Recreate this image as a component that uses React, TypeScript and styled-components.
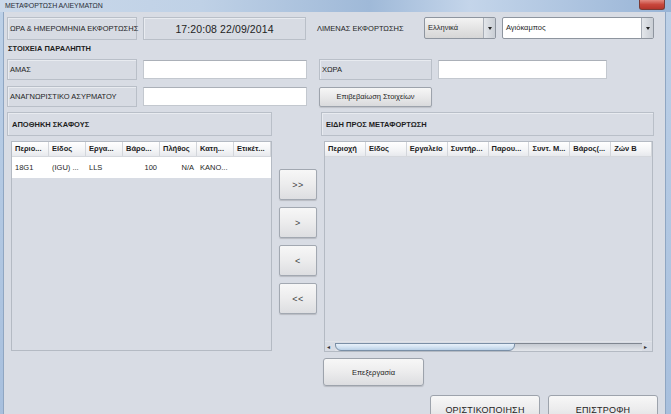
import styled, { createGlobalStyle } from "styled-components";

const GlobalStyle = createGlobalStyle`
  html, body {
    margin: 0;
    padding: 0;
    background: #d8dce4;
  }
  * {
    box-sizing: border-box;
  }
`;

const leftColumns = ["Περιο...", "Είδος", "Εργα...", "Βάρο...", "Πλήθος", "Κατη...", "Ετικέτ..."];
const rightColumns = ["Περιοχή", "Είδος", "Εργαλείο", "Συντήρ...", "Παρου...", "Συντ. Μ...", "Βάρος(...", "Ζών Β"];

const leftRows = [
  [
    { text: "18G1" },
    { text: "(IGU) ..." },
    { text: "LLS" },
    { text: "100", right: true },
    { text: "N/A", right: true },
    { text: "ΚΑΝΟ..." },
    { text: "" },
  ],
];

const App = () => {
  return (
    <Window>
      <GlobalStyle />
      <TitleBar>
        <TitleText>ΜΕΤΑΦΟΡΤΩΣΗ ΑΛΙΕΥΜΑΤΩΝ</TitleText>
        <CloseButton />
      </TitleBar>

      <Frame>
        <Edge $w={4} />
        <Content>
          <Row $h={23} $mt={5}>
            <LabelBox $w={130}>ΩΡΑ &amp; ΗΜΕΡΟΜΗΝΙΑ ΕΚΦΟΡΤΩΣΗΣ</LabelBox>
            <ValueBox $w={163} $ml={6}>17:20:08 22/09/2014</ValueBox>
            <PlainLabel $w={107} $ml={11}>ΛΙΜΕΝΑΣ ΕΚΦΟΡΤΩΣΗΣ</PlainLabel>
            <Select $w={72} $grey>
              <span>Ελληνικά</span>
              <SelectArrow />
            </Select>
            <Select $w={152} $ml={6}>
              <span>Αγιόκαμπος</span>
              <SelectArrow />
            </Select>
          </Row>

          <SectionTitle>ΣΤΟΙΧΕΙΑ ΠΑΡΑΛΗΠΤΗ</SectionTitle>

          <Row $h={21} $mt={0}>
            <LabelBox $w={130}>ΑΜΑΣ</LabelBox>
            <Input $w={164} $ml={6} />
            <LabelBox $w={113} $ml={12}>ΧΩΡΑ</LabelBox>
            <Input $w={169} $ml={6} />
          </Row>

          <Row $h={21} $mt={6}>
            <LabelBox $w={130}>ΑΝΑΓΝΩΡΙΣΤΙΚΟ ΑΣΥΡΜΑΤΟΥ</LabelBox>
            <Input $w={164} $ml={6} />
            <SmallButton $w={113} $ml={12}>Επιβεβαίωση Στοιχείων</SmallButton>
          </Row>

          <Main>
            <Column>
              <PanelHeader>ΑΠΟΘΗΚΗ ΣΚΑΦΟΥΣ</PanelHeader>
              <Table $ml={4} $h={210}>
                <HeaderRow $cols={7}>
                  {leftColumns.map((c) => (
                    <HeaderCell key={c}>{c}</HeaderCell>
                  ))}
                </HeaderRow>
                {leftRows.map((row, i) => (
                  <DataRow key={i} $cols={7}>
                    {row.map((cell, j) => (
                      <DataCell key={j} $right={cell.right}>
                        {cell.text}
                      </DataCell>
                    ))}
                  </DataRow>
                ))}
              </Table>
            </Column>

            <Arrows>
              <ArrowButton>&gt;&gt;</ArrowButton>
              <ArrowButton>&gt;</ArrowButton>
              <ArrowButton>&lt;</ArrowButton>
              <ArrowButton>&lt;&lt;</ArrowButton>
            </Arrows>

            <Column>
              <PanelHeader>ΕΙΔΗ ΠΡΟΣ ΜΕΤΑΦΟΡΤΩΣΗ</PanelHeader>
              <Table $ml={3} $mr={1} $h={211}>
                <HeaderRow $cols={8}>
                  {rightColumns.map((c) => (
                    <HeaderCell key={c}>{c}</HeaderCell>
                  ))}
                </HeaderRow>
                <TableFill />
                <ScrollBar>
                  <ScrollArrow>◂</ScrollArrow>
                  <Track>
                    <Thumb />
                  </Track>
                  <ScrollArrow>▸</ScrollArrow>
                </ScrollBar>
              </Table>
              <EditButton>Επεξεργασία</EditButton>
            </Column>
          </Main>

          <Footer>
            <BigButton>ΟΡΙΣΤΙΚΟΠΟΙΗΣΗ</BigButton>
            <BigButton>ΕΠΙΣΤΡΟΦΗ</BigButton>
          </Footer>
        </Content>
        <Edge $w={6} />
      </Frame>
    </Window>
  );
};

export default App;

const Window = styled.div`
  width: 671px;
  height: 414px;
  overflow: hidden;
  display: flex;
  flex-direction: column;
  background: #d8dce4;
  font-family: "Liberation Sans", Arial, sans-serif;
  color: #1e1e1e;
`;

const TitleBar = styled.div`
  height: 12px;
  flex: none;
  display: flex;
  justify-content: space-between;
  align-items: flex-start;
  padding-left: 5px;
  padding-right: 6px;
  background: linear-gradient(
    90deg,
    #cbd9ea 0%,
    #bfd1e6 30%,
    #9fb9d8 55%,
    #c4d5ea 70%,
    #98b4d6 100%
  );
`;

const TitleText = styled.span`
  font-size: 7px;
  line-height: 11px;
  color: #2a2f38;
  letter-spacing: -0.1px;
`;

const CloseButton = styled.div`
  width: 26px;
  height: 10px;
  border-radius: 0 0 3px 3px;
  background: linear-gradient(180deg, #e28a80 0%, #c8473c 50%, #b4352c 100%);
  border: 1px solid #7a3b36;
  border-top: none;
`;

const Frame = styled.div`
  flex: 1;
  display: flex;
`;

const Edge = styled.div<{ $w: number }>`
  width: ${(p) => p.$w}px;
  flex: none;
  background: linear-gradient(180deg, #bcd0e7, #a7bfdd);
  border-right: ${(p) => (p.$w === 4 ? "1px solid #8fa6c2" : "none")};
  border-left: ${(p) => (p.$w === 6 ? "1px solid #8fa6c2" : "none")};
`;

const Content = styled.div`
  flex: 1;
  display: flex;
  flex-direction: column;
  padding-left: 3px;
  min-width: 0;
`;

const Row = styled.div<{ $h: number; $mt: number }>`
  display: flex;
  align-items: center;
  height: ${(p) => p.$h}px;
  margin-top: ${(p) => p.$mt}px;
`;

const LabelBox = styled.div<{ $w: number; $ml?: number }>`
  width: ${(p) => p.$w}px;
  margin-left: ${(p) => p.$ml ?? 0}px;
  height: 100%;
  flex: none;
  display: flex;
  align-items: center;
  padding-left: 2px;
  font-size: 7.5px;
  white-space: nowrap;
  border: 1px solid #b9bfc8;
  box-shadow: inset 1px 1px 0 #e8ebf0;
  background: #d7dbe3;
`;

const ValueBox = styled(LabelBox)`
  justify-content: center;
  font-size: 10.5px;
  padding-left: 0;
  letter-spacing: 0.1px;
`;

const PlainLabel = styled.div<{ $w: number; $ml?: number }>`
  width: ${(p) => p.$w}px;
  margin-left: ${(p) => p.$ml ?? 0}px;
  flex: none;
  font-size: 7.5px;
  white-space: nowrap;
`;

const Select = styled.div<{ $w: number; $ml?: number; $grey?: boolean }>`
  width: ${(p) => p.$w}px;
  margin-left: ${(p) => p.$ml ?? 0}px;
  height: 22px;
  margin-top: -2px;
  flex: none;
  display: flex;
  align-items: center;
  justify-content: space-between;
  padding-left: 3px;
  font-size: 7.5px;
  border: 1px solid #8e959f;
  border-radius: 2px;
  background: ${(p) =>
    p.$grey ? "linear-gradient(180deg, #f3f3f3 0%, #e4e4e4 50%, #d6d6d6 100%)" : "#ffffff"};
`;

const SelectArrow = styled.div`
  width: 12px;
  height: 100%;
  border-left: 1px solid #a9afb8;
  background: linear-gradient(90deg, #e3e6ea, #c9ced5);
  position: relative;
  &::after {
    content: "";
    position: absolute;
    left: 4px;
    top: 9px;
    border-left: 2px solid transparent;
    border-right: 2px solid transparent;
    border-top: 3px solid #222;
  }
`;

const SectionTitle = styled.div`
  font-size: 7.5px;
  font-weight: bold;
  height: 19px;
  line-height: 17px;
  padding-left: 1px;
`;

const Input = styled.div<{ $w: number; $ml?: number }>`
  width: ${(p) => p.$w}px;
  margin-left: ${(p) => p.$ml ?? 0}px;
  height: 19px;
  flex: none;
  background: #ffffff;
  border: 1px solid #c3c8cf;
  border-top-color: #abb0b8;
`;

const SmallButton = styled.div<{ $w: number; $ml?: number }>`
  width: ${(p) => p.$w}px;
  margin-left: ${(p) => p.$ml ?? 0}px;
  height: 20px;
  flex: none;
  display: flex;
  align-items: center;
  justify-content: center;
  font-size: 7.5px;
  border: 1px solid #9da3ac;
  border-radius: 2px;
  background: linear-gradient(180deg, #f6f6f6 0%, #e9e9ea 50%, #d9dadc 100%);
  box-shadow: 0 1px 1px rgba(0, 0, 0, 0.12);
`;

const Main = styled.div`
  display: grid;
  grid-template-columns: 265px 49px 333px;
  margin-top: 5px;
`;

const Column = styled.div`
  display: flex;
  flex-direction: column;
  min-width: 0;
`;

const PanelHeader = styled.div`
  height: 24px;
  display: flex;
  align-items: center;
  padding-left: 4px;
  font-size: 7.5px;
  font-weight: bold;
  border: 1px solid #b9bfc8;
  box-shadow: inset 1px 1px 0 #e8ebf0;
`;

const Table = styled.div<{ $ml: number; $mr?: number; $h: number }>`
  margin-top: 5px;
  margin-left: ${(p) => p.$ml}px;
  margin-right: ${(p) => p.$mr ?? 0}px;
  height: ${(p) => p.$h}px;
  display: flex;
  flex-direction: column;
  border: 1px solid #b4bac3;
  background: #d8dce4;
  overflow: hidden;
`;

const HeaderRow = styled.div<{ $cols: number }>`
  display: grid;
  grid-template-columns: repeat(${(p) => p.$cols}, 1fr);
  height: 15px;
  flex: none;
  background: linear-gradient(180deg, #ffffff 0%, #f3f4f6 60%, #e7e9ed 100%);
  border-bottom: 1px solid #d5d8dd;
`;

const HeaderCell = styled.div`
  font-size: 7.5px;
  font-weight: bold;
  line-height: 14px;
  padding-left: 3px;
  white-space: nowrap;
  overflow: hidden;
  border-right: 1px solid #d3d6db;
`;

const DataRow = styled.div<{ $cols: number }>`
  display: grid;
  grid-template-columns: repeat(${(p) => p.$cols}, 1fr);
  height: 21px;
  flex: none;
  align-items: center;
  background: #ffffff;
`;

const DataCell = styled.div<{ $right?: boolean }>`
  font-size: 7.5px;
  padding: 0 3px;
  text-align: ${(p) => (p.$right ? "right" : "left")};
  white-space: nowrap;
  overflow: hidden;
`;

const TableFill = styled.div`
  flex: 1;
`;

const ScrollBar = styled.div`
  height: 10px;
  flex: none;
  display: flex;
  align-items: center;
  padding: 0 2px;
  border-top: 1px solid #e0e3e8;
`;

const ScrollArrow = styled.span`
  font-size: 6px;
  width: 6px;
  line-height: 10px;
  color: #333;
`;

const Track = styled.div`
  flex: 1;
  height: 8px;
  margin: 0 2px;
  border-top: 1px solid #7f8690;
  background: linear-gradient(180deg, #c5cad2, #e3e6eb);
`;

const Thumb = styled.div`
  width: 180px;
  height: 8px;
  margin-top: -1px;
  border: 1px solid #7a8fa6;
  border-radius: 0 0 6px 6px;
  background: linear-gradient(180deg, #e8f1fa 0%, #cfe0f0 60%, #b9d0e6 100%);
`;

const EditButton = styled.div`
  width: 101px;
  height: 28px;
  margin-top: 6px;
  margin-left: 2px;
  display: flex;
  align-items: center;
  justify-content: center;
  font-size: 7.5px;
  border: 1px solid #9da3ac;
  border-radius: 3px;
  background: linear-gradient(180deg, #f7f7f7 0%, #ececed 50%, #dcdde0 100%);
  box-shadow: 0 1px 1px rgba(0, 0, 0, 0.15);
`;

const Arrows = styled.div`
  display: flex;
  flex-direction: column;
  align-items: center;
  gap: 7px;
  padding-top: 57px;
  padding-left: 3px;
`;

const ArrowButton = styled.div`
  width: 38px;
  height: 31px;
  display: flex;
  align-items: center;
  justify-content: center;
  font-size: 9px;
  color: #444;
  letter-spacing: 0.5px;
  border: 1px solid #a2a8b1;
  border-radius: 2px;
  background: linear-gradient(180deg, #f7f7f7 0%, #ececed 50%, #dddee1 100%);
  box-shadow: 0 1px 1px rgba(0, 0, 0, 0.15);
`;

const Footer = styled.div`
  display: flex;
  gap: 8px;
  padding-left: 423px;
  margin-top: 9px;
`;

const BigButton = styled.div`
  width: 110px;
  height: 28px;
  flex: none;
  display: flex;
  align-items: center;
  justify-content: center;
  padding-top: 2px;
  font-size: 9px;
  letter-spacing: 0.2px;
  border: 1px solid #9da3ac;
  border-radius: 3px;
  background: linear-gradient(180deg, #f7f7f7 0%, #ececed 50%, #dcdde0 100%);
`;
